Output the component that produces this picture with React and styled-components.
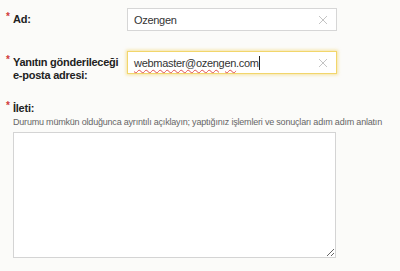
import React from 'react'
import styled, { createGlobalStyle } from 'styled-components'

const Global = createGlobalStyle`
  body {
    margin: 0;
    background: #fbfbf9;
    font-family: 'Liberation Sans', Arial, sans-serif;
  }
`

const Form = styled.div`
  width: 400px;
  height: 271px;
  padding: 8px 0 0 6px;
  box-sizing: border-box;
  overflow: hidden;
`

const Row = styled.div`
  display: flex;
  align-items: ${(p) => (p.top ? 'flex-start' : 'center')};
  margin-bottom: ${(p) => p.gap || 0}px;
`

const Label = styled.div`
  width: 121px;
  display: flex;
  font-size: 11px;
  font-weight: bold;
  letter-spacing: -0.25px;
  color: #222;
  line-height: 13px;
  white-space: nowrap;
  padding-top: ${(p) => p.offset || 0}px;
`

const Star = styled.span`
  color: #d03a3a;
  font-size: 10px;
  line-height: 8px;
  width: 7px;
  flex-shrink: 0;
`

const Field = styled.div`
  width: 210px;
  height: 23px;
  box-sizing: border-box;
  display: flex;
  align-items: center;
  padding: 0 8px 0 6px;
  background: #fff;
  border: 1px solid ${(p) => (p.focused ? '#f2d66b' : '#d6d6d6')};
  box-shadow: ${(p) => (p.focused ? '0 0 3px 1px rgba(240, 205, 90, 0.55)' : 'none')};
  font-size: 11px;
  letter-spacing: -0.3px;
  color: #333;
`

const Value = styled.span`
  flex: 1;
  white-space: nowrap;
`

const Misspelt = styled.span`
  text-decoration: underline wavy #e05050;
  text-decoration-thickness: 1px;
  text-underline-offset: 2px;
`

const Caret = styled.span`
  display: inline-block;
  width: 1px;
  height: 14px;
  background: #222;
  vertical-align: -3px;
`

const Clear = styled.svg`
  width: 10px;
  height: 10px;
  flex-shrink: 0;
`

const Hint = styled.div`
  font-size: 9px;
  letter-spacing: -0.2px;
  color: #666;
  margin: 2px 0 0 7px;
  white-space: nowrap;
`

const Message = styled.textarea`
  display: block;
  width: 323px;
  height: 126px;
  box-sizing: border-box;
  margin: 5px 0 0 7px;
  border: 1px solid #d4d4d4;
  background: #fff;
  outline: none;
`

const ClearIcon = () => (
  <Clear viewBox="0 0 10 10">
    <path d="M1 1L9 9M9 1L1 9" stroke="#c4c4c4" strokeWidth="1" />
  </Clear>
)

export default function App() {
  return (
    <>
      <Global />
      <Form>
        <Row gap={20}>
          <Label>
            <Star>*</Star>Ad:
          </Label>
          <Field>
            <Value>Ozengen</Value>
            <ClearIcon />
          </Field>
        </Row>
        <Row top gap={20}>
          <Label offset={5}>
            <Star>*</Star>
            <span>
              Yanıtın gönderileceği
              <br />
              e-posta adresi:
            </span>
          </Label>
          <Field focused>
            <Value>
              <Misspelt>webmaster@ozengen</Misspelt>.com<Caret />
            </Value>
            <ClearIcon />
          </Field>
        </Row>
        <Label>
          <Star>*</Star>İleti:
        </Label>
        <Hint>
          Durumu mümkün olduğunca ayrıntılı açıklayın; yaptığınız işlemleri ve sonuçları adım adım anlatın
        </Hint>
        <Message />
      </Form>
    </>
  )
}
